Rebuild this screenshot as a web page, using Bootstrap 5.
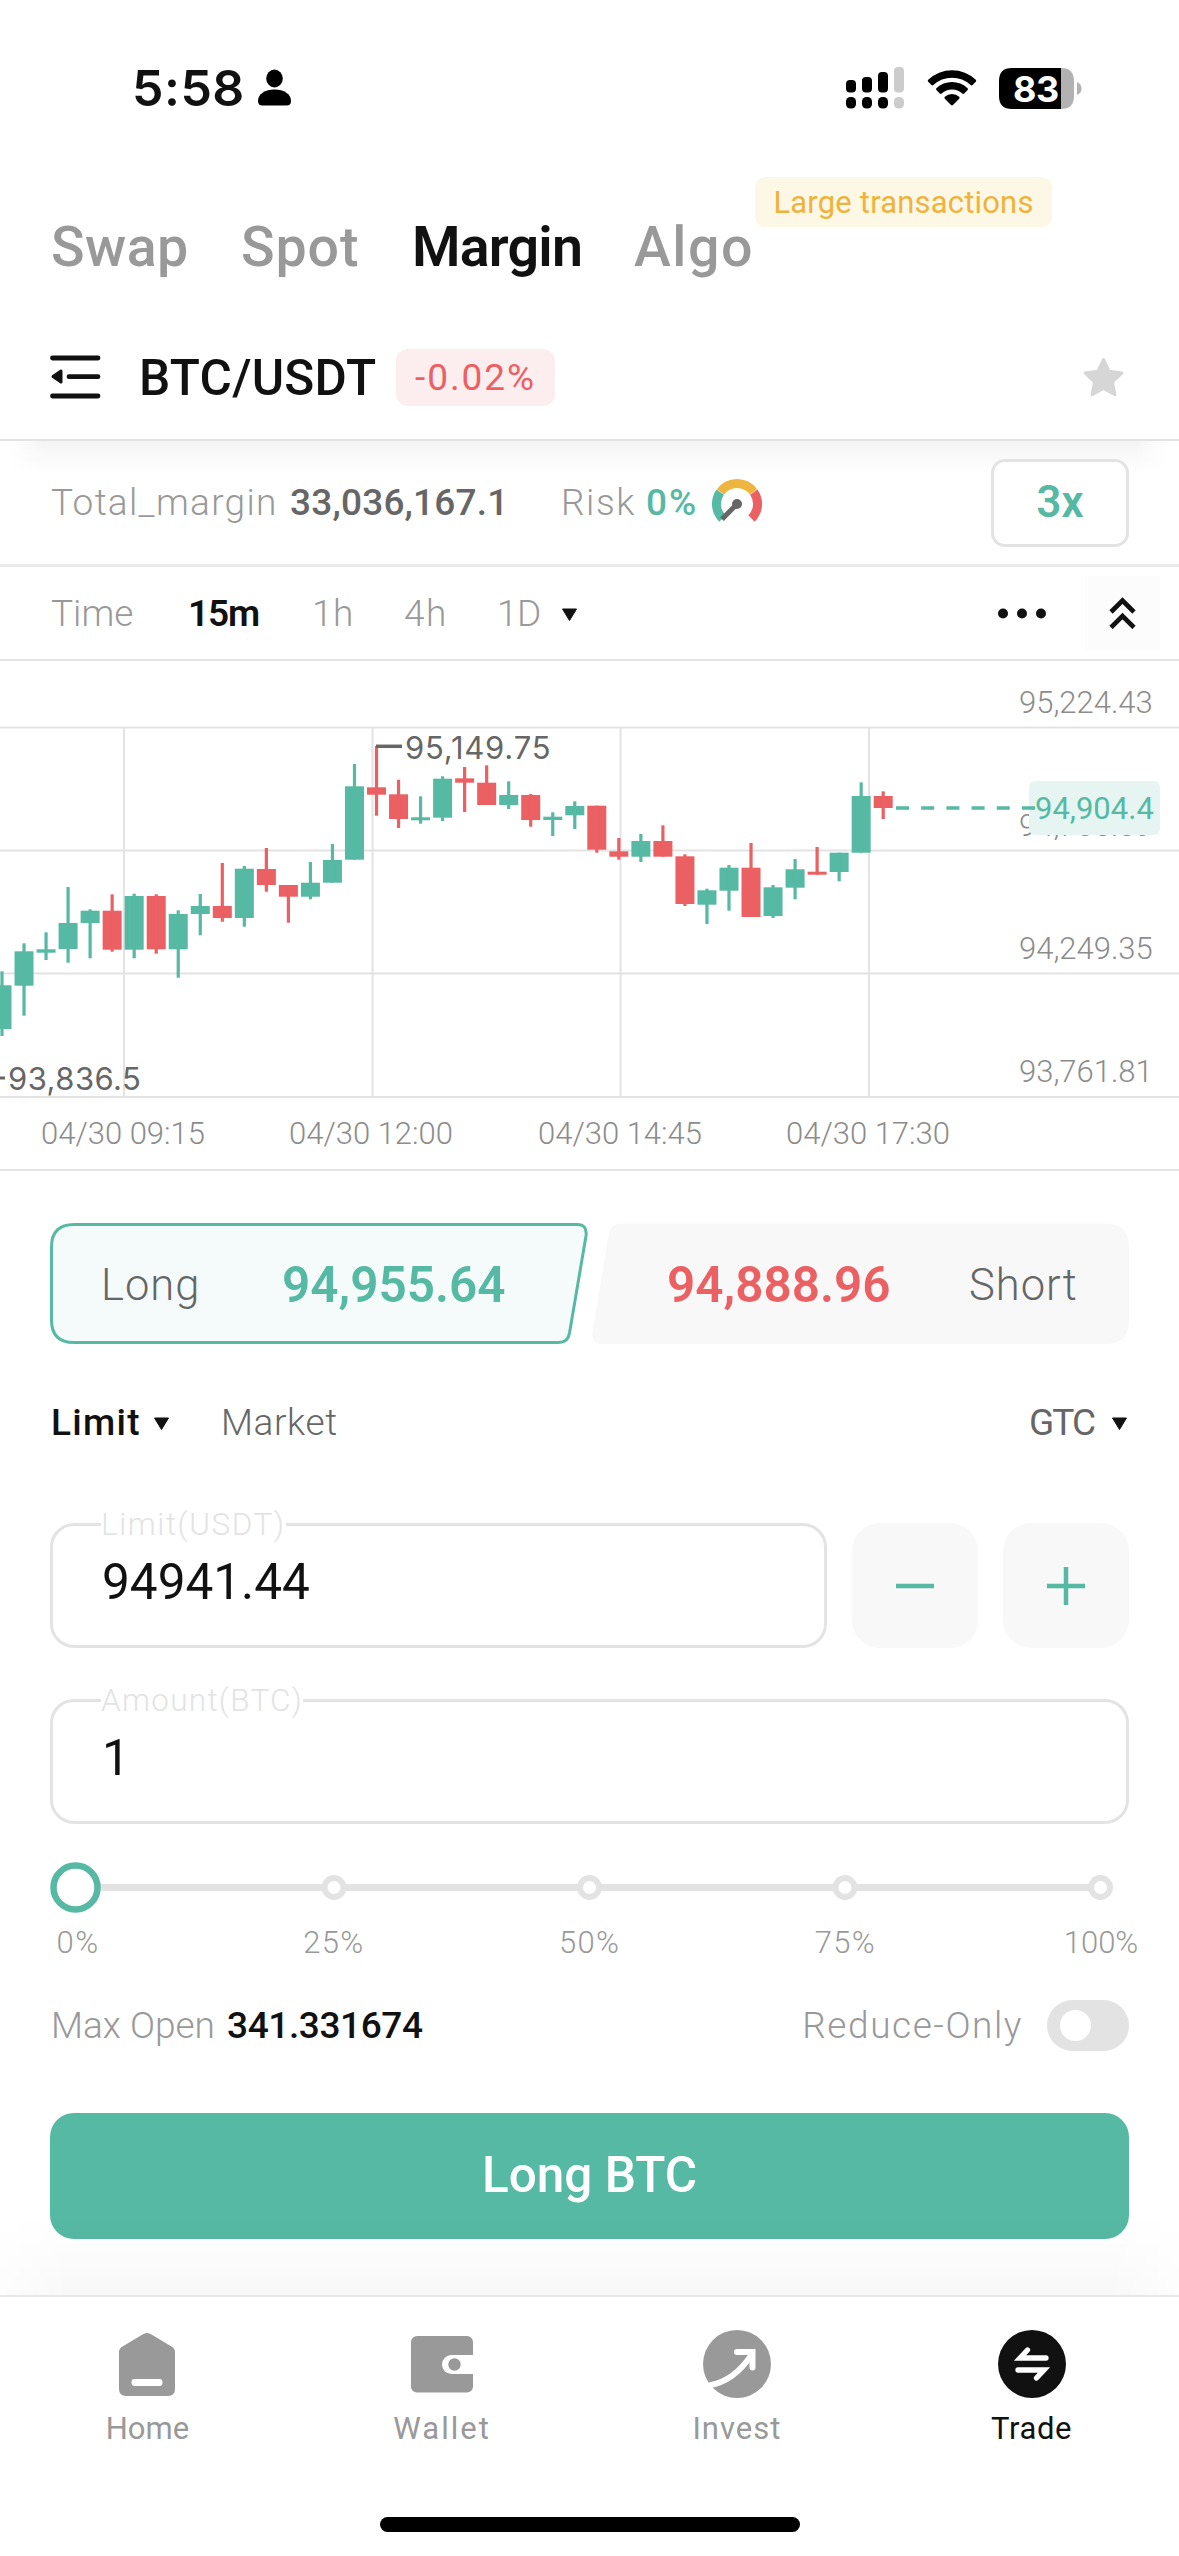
<!DOCTYPE html>
<html lang="en">
<head>
<meta charset="utf-8">
<meta name="viewport" content="width=device-width, initial-scale=1">
<title>BTC/USDT Margin</title>
<link href="https://cdn.jsdelivr.net/npm/bootstrap@5.3.0/dist/css/bootstrap.min.css" rel="stylesheet">
<style>
  :root { --up: #56b9a3; --down: #eb6063; --ink: #111; --mid: #666; --soft: #999; --line: #e3e3e3; --fill: #f8f8f8; }
  body { font-family: Roboto, "Liberation Sans", sans-serif; color: var(--ink); background: #fff; width: 1179px; height: 2556px; overflow: hidden; line-height: 1; }
  svg { display: block; flex: none; }
  span, a, button, label { white-space: nowrap; }
  .c-up { color: var(--up); } .c-down { color: var(--down); } .c-mid { color: var(--mid); } .c-soft { color: var(--soft); } .c-ink { color: var(--ink); }
  .f31 { font-size: 31px; } .f37 { font-size: 37px; } .f43 { font-size: 43.5px; } .f49 { font-size: 49.5px; }
  .w3 { font-weight: 300; } .w4 { font-weight: 400; } .w5 { font-weight: 500; } .w6 { font-weight: 600; }
  .s03 { letter-spacing: .2px; } .s06 { letter-spacing: .6px; } .s10 { letter-spacing: 1px; } .s13 { letter-spacing: 1.3px; } .s15 { letter-spacing: 1.55px; } .s20 { letter-spacing: 2px; }
  .n05 { letter-spacing: -.4px; } .n12 { letter-spacing: -1.2px; } .n18 { letter-spacing: -1.85px; }

  .statusbar { height: 176px; padding: 0 97px 0 132px; font-family: Inter, Roboto, sans-serif; }
  .clock { font-size: 50px; font-weight: 600; letter-spacing: .5px; }
  .status-icons { gap: 23px; }
  .tabs-row { height: 142px; padding: 2px 0 0 51px; font-size: 55.5px; font-weight: 500; }
  .tabs-row a { color: var(--soft); text-decoration: none; }
  .tabs-row a.current { color: var(--ink); font-weight: 600; letter-spacing: -.76px; }
  .tab-a { width: 190px; letter-spacing: .43px; } .tab-b { width: 171px; letter-spacing: .9px; } .tab-c { width: 222px; } .tab-d { letter-spacing: 1.5px; }
  .promo { position: absolute; left: 755px; top: 177px; width: 297px; height: 50px; border-radius: 10px; background: #fdf7e6; color: #eeb33c; letter-spacing: .18px; font-weight: 400; }
  .pair-row { height: 123px; padding: 0 54px 0 50px; border-bottom: 2px solid var(--line); }
  .pair-name { width: 257px; margin-left: 38px; letter-spacing: .25px; }
  .change { width: 159px; height: 57px; border-radius: 12px; background: #fceeee; letter-spacing: 1.9px; }
  .drop { height: 32px; margin: 0 10px -32px; background: linear-gradient(#f4f4f4, rgba(255,255,255,0)); -webkit-mask-image: linear-gradient(90deg, transparent, #000 34px, #000 calc(100% - 34px), transparent); mask-image: linear-gradient(90deg, transparent, #000 34px, #000 calc(100% - 34px), transparent); }
  .margin-row { height: 126px; padding: 0 50px 0 51px; border-bottom: 3px solid #ebebeb; }
  .lever { width: 138px; height: 88px; border: 3px solid var(--line); border-radius: 14px; }
  .time-row { height: 94px; padding: 0 19px 0 51px; border-bottom: 2px solid var(--line); }
  .collapse-box { width: 75px; height: 75px; margin-left: 39px; background: #fcfcfc; }
  .panel { padding: 52px 50px 0; }
  .sides { height: 121px; }
  .sides > svg { position: absolute; inset: 0; }
  .type-row { height: 56px; margin-top: 50px; padding: 0 1px; }
  .fields { margin-top: 73px; gap: 25px; }
  .field { height: 125px; border: 3px solid var(--line); border-radius: 24px; padding: 0 0 6px 49px; }
  .field label { position: absolute; left: 48px; top: -17px; height: 32px; line-height: 32px; background: #fff; color: var(--line); font-size: 31.5px; font-weight: 300; padding: 0; }
  .step-btn { width: 126px; height: 125px; border-radius: 28px; background: var(--fill); }
  .slider-labels { height: 30px; margin-top: 14px; padding: 0 28px; }
  .slider-labels span { width: 0; }
  .toggle { width: 82px; height: 51px; border-radius: 26px; background: var(--line); padding-left: 13px; }
  .toggle i { width: 31px; height: 31px; border-radius: 50%; background: #fff; }
  .submit { height: 126px; border-radius: 24px; background: var(--up); color: #fff; }
  .bottom-glow { height: 80px; margin-top: -24px; background: linear-gradient(rgba(0,0,0,0), rgba(0,0,0,.028)); -webkit-mask-image: linear-gradient(90deg, rgba(0,0,0,.3), #000 70px, #000 calc(100% - 70px), rgba(0,0,0,.3)); mask-image: linear-gradient(90deg, rgba(0,0,0,.3), #000 70px, #000 calc(100% - 70px), rgba(0,0,0,.3)); }
  .bottom-nav { border-top: 2px solid #e8e8e8; padding-top: 33px; }
  .bottom-nav a { text-decoration: none; color: var(--soft); gap: 13px; }
  .bottom-nav a span { height: 36px; line-height: 36px; }
  .home-pill { width: 420px; height: 15px; border-radius: 8px; background: #000; margin: 70px auto 0; }
  .chart text { font-family: Roboto, sans-serif; font-size: 31px; font-weight: 300; fill: #8c8c8c; }
  .chart .mark-txt { font-family: Inter, sans-serif; font-weight: 400; fill: var(--mid); }
</style>
</head>
<body>
<header class="statusbar d-flex align-items-center justify-content-between">
  <div class="d-flex align-items-center">
    <span class="clock">5:58</span>
    <svg width="36" height="38" viewBox="0 0 36 38" style="margin-left:12px"><ellipse cx="17.5" cy="9.5" rx="8.3" ry="9"/><path d="M1 32C1 25 8 20.500 17.500 20.500S34 25 34 32c0 3-1.500 4.500-4.500 4.500h-24C2.500 36.500 1 35 1 32z"/></svg>
  </div>
  <div class="status-icons d-flex align-items-center">
    <svg width="58" height="42" viewBox="0 0 58 42">
      <g><rect x="0" y="13" width="10" height="12.500" rx="4"/><rect x="16" y="10" width="10" height="15.500" rx="4"/><rect x="32" y="5" width="10" height="20.500" rx="4"/><rect x="48" y="0" width="10" height="25.500" rx="4" fill="#ccc"/>
      <rect x="0" y="30" width="10" height="11.500" rx="4.500"/><rect x="16" y="30" width="10" height="11.500" rx="4.500"/><rect x="32" y="30" width="10" height="11.500" rx="4.500"/><rect x="48" y="30" width="10" height="11.500" rx="4.500" fill="#ccc"/></g>
    </svg>
    <svg width="50" height="38" viewBox="0 0 50 38">
      <path d="M1.200 10.800a34.500 34.500 0 0 1 47.600 0q.8.900 0 1.900l-3.300 3.400q-.9.800-1.900 0a27 27 0 0 0-37.200 0q-1 .8-1.900 0L1.200 12.700q-.8-1 0-1.900z"/>
      <path d="M9.400 19.200a22.500 22.500 0 0 1 31.200 0q.8 1 0 1.900l-3.400 3.400q-.9.800-1.900 0a15.500 15.500 0 0 0-20.600 0q-1 .8-1.900 0l-3.400-3.400q-.8-.9 0-1.900z"/>
      <path d="M17.800 27.800a10.800 10.800 0 0 1 14.400 0q.8.900 0 1.900l-6.200 6.400q-1 .9-2 0l-6.200-6.400q-.8-1 0-1.900z"/>
    </svg>
    <svg width="83" height="41" viewBox="0 0 83 41" style="margin-left:-1px">
      <path d="M13 0H62V41H13Q0 41 0 28V13Q0 0 13 0z"/><path d="M62 0Q75 0 75 13V28Q75 41 62 41z" fill="#b2b2b2"/>
      <path d="M78 14q4.500 2 4.500 6.500T78 27z" fill="#b2b2b2"/>
      <text x="14" y="33.500" font-family="Inter" font-size="36" font-weight="700" fill="#fff" letter-spacing="-.4">83</text>
    </svg>
  </div>
</header>

<nav class="tabs-row d-flex align-items-center">
  <a class="tab-a">Swap</a><a class="tab-b">Spot</a><a class="tab-c current">Margin</a><a class="tab-d">Algo</a>
  <span class="promo d-flex align-items-center justify-content-center f31">Large transactions</span>
</nav>

<section class="pair-row d-flex align-items-center">
  <svg width="51" height="44" viewBox="0 0 51 44" fill="none" stroke="#111" stroke-width="4.800" stroke-linecap="round" style="margin-top:-4px"><path d="M2.500 3H48M19 21.700H48M2.500 41H48"/><path d="M3 21.500L11 16v11z" fill="#111" stroke-width="3" stroke-linejoin="round"/></svg>
  <span class="pair-name f49 w5">BTC/USDT</span>
  <span class="change d-flex align-items-center justify-content-center f37 c-down" style="margin-top:-2px">-0.02%</span>
  <svg class="ms-auto" width="43" height="42" viewBox="0 0 43 42" style="margin-top:-2px"><path d="M21.500 2.500l5.600 11.800 12.900 1.700-9.500 9 2.400 12.800-11.400-6.300-11.400 6.300 2.400-12.800-9.500-9 12.900-1.700z" fill="#d6d6d6" stroke="#d6d6d6" stroke-width="3" stroke-linejoin="round"/></svg>
</section>
<div class="drop"></div>

<section class="margin-row d-flex align-items-center position-relative">
  <span class="f37 w3 c-soft s13" style="width:239px">Total_margin</span>
  <span class="f37 w5 c-mid s03" style="width:271px">33,036,167.1</span>
  <span class="f37 w3 c-soft s15" style="width:85px">Risk</span>
  <span class="f37 w5 c-up s20" style="width:65px">0%</span>
  <svg width="52" height="50" viewBox="-26 -26 52 50" fill="none" stroke-width="9">
    <path d="M-14.500 14.500A20.500 20.500 0 0 1 -16.800 -11.800" stroke="#56b9a3"/>
    <path d="M14.500 14.500A20.500 20.500 0 0 0 16.800 -11.800" stroke="#eb6063"/>
    <path d="M-16.500 -12.200A20.500 20.500 0 0 1 16.500 -12.200" stroke="#eeb53f"/>
    <path d="M0 0L-15 15.200" stroke="#666" stroke-width="5"/><circle r="5" fill="#666" stroke="none"/>
  </svg>
  <button class="lever bg-white p-0 ms-auto f43 w6 c-up">3x</button>
</section>

<section class="time-row d-flex align-items-center f37 w3 c-soft">
  <span style="width:137px">Time</span>
  <span class="w6 c-ink n12" style="width:124px">15m</span>
  <span class="s06" style="width:92px">1h</span>
  <span class="s15" style="width:93px">4h</span>
  <span class="n05" style="width:64px">1D</span>
  <svg width="17" height="14" viewBox="0 0 17 14" class="mt-1"><path d="M1.500 1h14l-7 11.500z" fill="#111" stroke="#111" stroke-linejoin="round"/></svg>
  <svg class="ms-auto" width="48" height="11" viewBox="0 0 48 11" fill="#111"><circle cx="5" cy="5.500" r="5"/><circle cx="24" cy="5.500" r="5"/><circle cx="43" cy="5.500" r="5"/></svg>
  <div class="collapse-box d-flex align-items-center justify-content-center">
    <svg width="27" height="32" viewBox="0 0 27 32" fill="none" stroke="#111" stroke-width="4.600"><path d="M2 15L13.500 3.500 25 15M2 30.500L13.500 19 25 30.500"/></svg>
  </div>
</section>

<svg class="chart" id="chart" width="1179" height="510" viewBox="0 661 1179 510">
  <g stroke="#e3e3e3" stroke-width="2"><path d="M0 727.500H1179M0 850.500H1179M0 973.500H1179M0 1097H1179M0 1170H1179M124 727V1097M372.500 727V1097M620.500 727V1097M869 727V1097"/></g>
  <g id="candles"></g>
  <path d="M376 746.300H402" stroke="#666" stroke-width="3.500"/><text class="mark-txt" x="405" y="759" letter-spacing=".8">95,149.75</text>
  <path d="M0 1078H5" stroke="#666" stroke-width="3"/><text class="mark-txt" x="8" y="1090" letter-spacing=".45">93,836.5</text>
  <text x="1019" y="713">95,224.43</text><text x="1019" y="836">94,736.89</text><text x="1019" y="959">94,249.35</text><text x="1019" y="1082">93,761.81</text>
  <rect x="1029" y="781" width="131" height="54" rx="6" fill="#e6f5f2"/>
  <path d="M896 808H1035" stroke="#56b9a3" stroke-width="3.500" stroke-dasharray="13 12.200"/>
  <text x="1035" y="819" style="fill:#56b9a3;font-weight:400">94,904.4</text>
  <text x="41" y="1144">04/30 09:15</text><text x="289" y="1144">04/30 12:00</text><text x="538" y="1144">04/30 14:45</text><text x="786" y="1144">04/30 17:30</text>
</svg>

<main class="panel">
  <div class="sides position-relative">
    <svg width="1079" height="121" viewBox="0 0 1079 121">
      <path d="M24 1.500H527Q537.500 1.500 536 13L519.500 110Q518 119.500 509 119.500H24Q1.500 119.500 1.500 97V24Q1.500 1.500 24 1.500z" fill="#f5fbfa" stroke="#56b9a3" stroke-width="3"/>
      <path d="M571 .5H1055Q1079 .5 1079 24V97Q1079 121 1055 121H552Q541 121 542.500 109L558.500 12Q560.500 .5 571 .5z" fill="#f8f8f8"/>
    </svg>
    <div class="position-relative d-flex align-items-center h-100 pt-1">
      <span class="f43 w3 c-mid s10" style="width:232px;padding-left:51px">Long</span>
      <span class="f49 w6 c-up" style="width:385px">94,955.64</span>
      <span class="f49 w6 c-down" style="width:302px">94,888.96</span>
      <span class="f43 w3 c-mid s10">Short</span>
    </div>
  </div>

  <div class="type-row d-flex align-items-center f37">
    <span class="w5 s13" style="width:102px">Limit</span>
    <svg width="17" height="14" viewBox="0 0 17 14" class="mt-1"><path d="M1.500 1h14l-7 11.500z" fill="#111" stroke="#111" stroke-linejoin="round"/></svg>
    <span class="w3 c-mid s06" style="margin-left:51px">Market</span>
    <span class="c-mid ms-auto n18" style="width:82px">GTC</span>
    <svg width="17" height="14" viewBox="0 0 17 14" class="mt-1"><path d="M1.500 1h14l-7 11.500z" fill="#111" stroke="#111" stroke-linejoin="round"/></svg>
  </div>

  <div class="fields d-flex">
    <div class="field flex-grow-1 position-relative d-flex align-items-center">
      <label class="s15">Limit(USDT)</label><span class="f49">94941.44</span>
    </div>
    <div class="step-btn d-flex align-items-center justify-content-center"><svg width="40" height="40" stroke="#56b9a3" stroke-width="4.500"><path d="M1 20H39"/></svg></div>
    <div class="step-btn d-flex align-items-center justify-content-center"><svg width="40" height="40" stroke="#56b9a3" stroke-width="4.500"><path d="M1 20H39M20 1V39"/></svg></div>
  </div>
  <div class="field position-relative d-flex align-items-center" style="margin-top:51px">
    <label class="s13">Amount(BTC)</label><span class="f49">1</span>
  </div>

  <svg width="1079" height="51" viewBox="0 0 1079 51" style="margin-top:38px">
    <path d="M40 25.500H1050" stroke="#e3e3e3" stroke-width="7"/>
    <g fill="#fff" stroke="#e3e3e3" stroke-width="6"><circle cx="284" cy="25.500" r="9.500"/><circle cx="539.500" cy="25.500" r="9.500"/><circle cx="795" cy="25.500" r="9.500"/><circle cx="1050.500" cy="25.500" r="9.500"/></g>
    <circle cx="25.500" cy="25.500" r="22" fill="#fff" stroke="#56b9a3" stroke-width="6.500"/>
  </svg>
  <div class="slider-labels d-flex align-items-center justify-content-between f31 w3 c-soft">
    <span class="d-flex justify-content-center s15">0%</span><span class="d-flex justify-content-center s13">25%</span><span class="d-flex justify-content-center s13">50%</span><span class="d-flex justify-content-center s13">75%</span><span class="d-flex justify-content-center">100%</span>
  </div>

  <div class="d-flex align-items-center f37" style="margin-top:43px">
    <span class="w3 c-soft" style="width:177px;padding-left:1px">Max Open</span>
    <span class="w5 n05">341.331674</span>
    <span class="w3 c-soft ms-auto s15" style="margin-right:24px">Reduce-Only</span>
    <div class="toggle d-flex align-items-center"><i></i></div>
  </div>
  <button class="submit border-0 w-100 f49 w5" style="margin-top:62px">Long BTC</button>
</main>

<div class="bottom-glow"></div>
<nav class="bottom-nav bg-white">
  <div class="row g-0 text-center f31">
    <a class="col d-flex flex-column align-items-center">
      <svg width="68" height="68" viewBox="0 0 68 68"><path d="M29.500 4.500Q34 1.500 38.500 4.500L58.500 16.500Q62 18.500 62 22V59Q62 66 55 66H13Q6 66 6 59V22Q6 18.500 9.500 16.500z" fill="#999"/><rect x="18.500" y="49" width="31" height="7" rx="3" fill="#fff"/></svg>
      <span>Home</span></a>
    <a class="col d-flex flex-column align-items-center">
      <svg width="68" height="68" viewBox="0 0 68 68"><rect x="3" y="6" width="62" height="56.500" rx="6" fill="#999"/><path d="M66 25H43.500a9.500 9.500 0 0 0 0 19H66z" fill="#fff"/><circle cx="46.500" cy="34.500" r="6.200" fill="#999"/></svg>
      <span class="s20">Wallet</span></a>
    <a class="col d-flex flex-column align-items-center">
      <svg width="68" height="68" viewBox="0 0 68 68"><circle cx="34" cy="34" r="34" fill="#999"/><path d="M6 55.500C26 52 40 38 49 24" fill="none" stroke="#fff" stroke-width="6"/><path d="M34 22H49.500V37.500" fill="none" stroke="#fff" stroke-width="6" stroke-linecap="round"/><path d="M42 21H51V32z" fill="#fff"/></svg>
      <span class="s10">Invest</span></a>
    <a class="col d-flex flex-column align-items-center">
      <svg width="68" height="68" viewBox="0 0 68 68"><circle cx="34" cy="34" r="34" fill="#111"/><path d="M48 28H22L29.500 20M20 40H46L38.500 48" fill="none" stroke="#fff" stroke-width="5.300" stroke-linecap="round" stroke-linejoin="miter"/></svg>
      <span class="c-ink s06">Trade</span></a>
  </div>
  <div class="home-pill"></div>
</nav>

<script>
  // direction, body top, body bottom, wick top, wick bottom
  const candles = [
    [1,985.3,1029,971.3,1036],[1,951.3,985.7,943.3,1015.7],[1,949.3,952.7,932.3,960],[1,923,949,887,962.7],[1,910.7,923,909.3,958.3],
    [0,910.7,949.7,894.3,951.7],[1,896,949.7,893.7,958.3],[0,896,949.3,894.3,953.7],[1,914,949.3,910.3,977.7],[1,906,914,894,935.3],
    [0,906,918,863,921.7],[1,868.7,918,866,926.7],[0,869,885,848,891.7],[0,885,896.7,885,922.7],[1,882.7,896.7,862,899.3],
    [1,860,882.7,844,882.7],[1,786.3,859.7,764,859.7],[0,787.3,794.7,746,815.7],[0,794.3,819,779.7,828],[1,817.3,820.3,796.3,823.7],
    [1,778.7,817.7,776.3,821],[0,778.3,782.7,767,812],[0,782.7,805,765.3,805],[1,795,805,781.3,809],[0,795,820,794,826.7],
    [1,816.7,820,812.3,836],[1,806,815.3,801.3,829],[0,805.7,849.7,805.7,852.7],[0,851.3,856.7,838,859.7],[1,841,856.7,834,862],
    [0,841,856.7,825.3,856.7],[0,856.3,904,854.3,906],[1,890.3,904.7,888.7,924],[1,867.7,890.7,865,910.7],[0,867.7,917,843,917],
    [1,887.3,916,885,918],[1,869.3,887.7,859,899.3],[0,871.7,874.7,847,874.7],[1,852.7,872,852.7,881.3],[1,796,852.7,782.3,852.7],[0,796,808,791.3,819]
  ];
  document.getElementById('candles').innerHTML = candles.map(([up, t, b, wt, wb], i) => {
    const x = 2 + i * 22.03, c = up ? '#56b9a3' : '#eb6063';
    return `<g fill="${c}"><rect x="${x - 9.5}" y="${t}" width="19" height="${b - t}"/><rect x="${x - 1.6}" y="${wt}" width="3.2" height="${wb - wt}"/></g>`;
  }).join('');
</script>
<script src="https://cdn.jsdelivr.net/npm/bootstrap@5.3.0/dist/js/bootstrap.bundle.min.js"></script>
</body>
</html>
